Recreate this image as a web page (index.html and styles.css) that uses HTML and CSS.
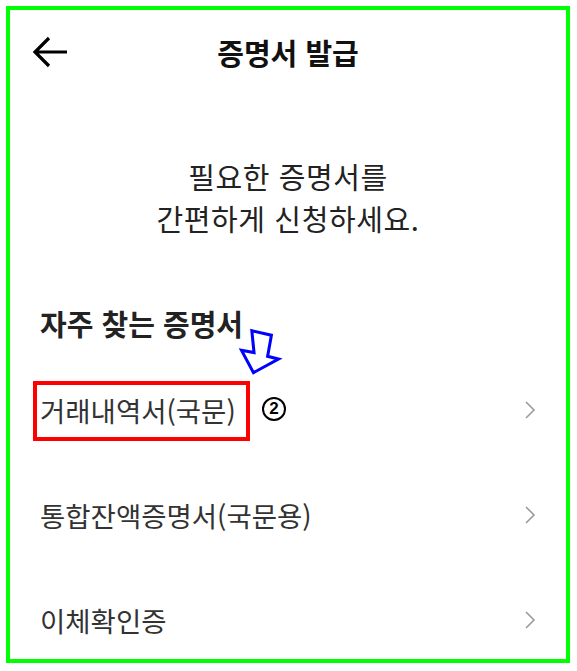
FILE: index.html
```html
<!DOCTYPE html>
<html lang="ko">
<head>
  <meta charset="UTF-8" />
  <meta name="viewport" content="width=device-width, initial-scale=1.0"/>
  <title>증명서 발급</title>
  <link rel="stylesheet" href="styles.css">
</head>
<body>
  <div class="frame">
    <div class="header">
      <button class="back" aria-label="뒤로">
        <svg width="36" height="32" viewBox="0 0 36 32"><path d="M35 16H3M17 2L3 16l14 14" fill="none" stroke="#000" stroke-width="3.2"/></svg>
      </button>
      <div class="title">증명서 발급</div>
    </div>

    <div class="intro">필요한 증명서를<br>간편하게 신청하세요.</div>

    <div class="section-title">자주 찾는 증명서</div>

    <div class="list">
      <div class="row">
        <span class="label marked">거래내역서(국문)</span>
        <svg class="chev" width="12" height="20" viewBox="0 0 12 20"><path d="M2 2l8 8-8 8" fill="none" stroke="#9a9a9a" stroke-width="1.6"/></svg>
        <!-- annotation -->
        <svg class="hint-arrow" width="48" height="50" viewBox="0 0 44 46"><path d="M14.5 3.5L32.5 7.5 29 27 39 29.5 16 42 5 21.5 16.5 23.5Z" fill="none" stroke="#0000ff" stroke-width="2.8" stroke-linejoin="miter"/></svg>
        <span class="step">2</span>
      </div>
      <div class="row">
        <span class="label">통합잔액증명서(국문용)</span>
        <svg class="chev" width="12" height="20" viewBox="0 0 12 20"><path d="M2 2l8 8-8 8" fill="none" stroke="#9a9a9a" stroke-width="1.6"/></svg>
      </div>
      <div class="row">
        <span class="label">이체확인증</span>
        <svg class="chev" width="12" height="20" viewBox="0 0 12 20"><path d="M2 2l8 8-8 8" fill="none" stroke="#9a9a9a" stroke-width="1.6"/></svg>
      </div>
    </div>
  </div>
</body>
</html>
```

FILE: styles.css
```css
body {
  margin: 0;
  background: #fff;
  font-family: "Noto Sans CJK KR", "Noto Sans", sans-serif;
  color: #222;
}
.frame {
  margin: 6px;
  width: 564px;
  height: 657px;
  box-sizing: border-box;
  border: 4px solid #00ff00;
  overflow: hidden;
}
.header {
  height: 84px;
  display: flex;
  align-items: center;
  position: relative;
  padding: 0 22px;
}
.back {
  background: none;
  border: none;
  padding: 0;
  display: flex;
}
.title {
  position: absolute;
  left: 0;
  right: 0;
  text-align: center;
  font-size: 29px;
  font-weight: 700;
  color: #111;
  pointer-events: none;
}
.intro {
  margin-top: 61px;
  text-align: center;
  font-size: 29px;
  line-height: 42px;
  letter-spacing: 0.6px;
  color: #222;
}
.section-title {
  margin-top: 66px;
  padding: 0 30px;
  font-size: 29px;
  line-height: 36px;
  font-weight: 700;
  color: #222;
}
.list {
  margin-top: 16px;
}
.row {
  height: 105px;
  display: flex;
  align-items: center;
  justify-content: space-between;
  padding: 0 30px;
  position: relative;
}
.label {
  font-size: 27.5px;
  line-height: 40px;
  color: #333;
}
.marked {
  position: relative;
}
.marked::after {
  content: "";
  position: absolute;
  left: -7px;
  right: -14px;
  top: -9px;
  bottom: -11px;
  border: 4px solid #ff0000;
}
.chev {
  display: block;
}
.hint-arrow {
  position: absolute;
  left: 226px;
  top: -30px;
}
.step {
  position: absolute;
  left: 252px;
  top: 40px;
  width: 24px;
  height: 24px;
  box-sizing: border-box;
  border: 2.5px solid #000;
  border-radius: 50%;
  font-family: "Liberation Sans", sans-serif;
  font-weight: 700;
  font-size: 17px;
  line-height: 19px;
  text-align: center;
  color: #000;
}
```
